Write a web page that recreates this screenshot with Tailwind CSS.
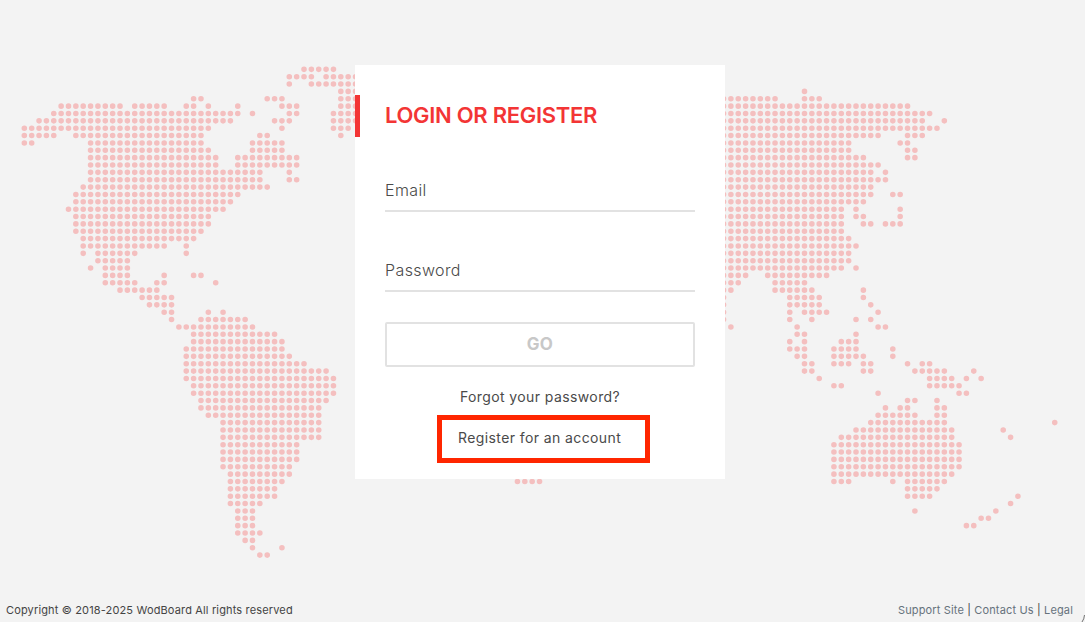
<!DOCTYPE html>
<html lang="en">
  <head>
    <meta charset="UTF-8" />
    <meta name="viewport" content="width=device-width, initial-scale=1.0" />
    <title>WodBoard - Login</title>
    <script src="https://cdn.jsdelivr.net/npm/@tailwindcss/browser@4"></script>
  </head>
  <body class="relative h-[622px] w-[1085px] overflow-hidden bg-[#f3f3f3] font-['Inter','Liberation_Sans',sans-serif] text-[#4a4a4a]">
    <!-- dotted world map: one unit = one grid step, each subpath is a run of dots -->
    <svg class="absolute inset-0" width="1085" height="622" viewBox="-3.306 -9.42 147.418 84.51" fill="none" stroke="#f4bfbf" stroke-width="0.76" stroke-linecap="round" stroke-dasharray="0 1" aria-hidden="true">
      <path d="M38 0h4.01 M36 1h3.01 M41 1h4.01 M36 2h.01 M39 2h6.01 M43 3h2.01 M23 4h1.01 M33 4h2.01 M43 4h2.01
        M5 5h8.01 M15 5h4.01 M22 5h1.01 M25 5h.01 M29 5h.01 M35 5h2.01 M43 5h2.01
        M4 6h25.01 M31 6h.01 M36 6h1.01 M42 6h3.01 M2 7h26.01 M34 7h2.01 M42 7h3.01
        M0 8h25.01 M35 8h.01 M42 8h2.01 M0 9h4.01 M7 9h17.01 M32 9h1.01 M43 9h.01
        M0 10h1.01 M9 10h15.01 M31 10h4.01 M9 11h16.01 M31 11h4.01
        M9 12h17.01 M29 12h8.01 M9 13h17.01 M29 13h8.01 M9 14h23.01 M36 14h.01 M9 15h23.01 M36 15h1.01
        M8 16h25.01 M7 17h22.01 M7 18h21.01 M6 19h21.01 M7 20h18.01 M7 21h18.01 M7 22h17.01 M8 23h15.01
        M8 24h11.01 M22 24h.01 M8 25h.01 M10 25h5.01 M22 25h.01 M10 26h4.01 M9 27h.01 M11 27h3.01
        M11 28h3.01 M19 28h.01 M23 28h1.01 M11 29h4.01 M18 29h1.01 M26 29h.01 M13 30h5.01 M16 31h4.01
        M17 32h3.01 M19 33h1.01 M25 33h.01 M27 33h.01 M20 34h.01 M24 34h6.01 M21 35h10.01
        M23 36h11.01 M23 37h12.01 M22 38h13.01 M22 39h14.01 M22 40h16.01 M22 41h19.01 M22 42h20.01
        M23 43h19.01 M23 44h19.01 M24 45h17.01 M24 46h16.01 M25 47h15.01 M27 48h13.01 M27 49h13.01 M27 50h13.01
        M27 51h10.01 M27 52h10.01 M27 53h10.01 M27 54h9.01 M28 55h8.01 M28 56h7.01 M28 57h6.01 M28 58h6.01 M28 59h4.01
        M29 60h2.01 M29 61h2.01 M29 62h2.01 M29 63h3.01 M30 64h1.01 M31 65h.01 M35 65h.01 M32 66h1.01
        M67 56h3.01" />
      <path d="M106 3h.01 M95 4h7.01 M106 4h2.01 M95 5h25.01 M95 6h28.01 M95 7h27.01 M125 7h.01 M95 8h29.01
        M95 9h21.01 M120 9h2.01 M95 10h17.01 M119 10h1.01 M95 11h17.01 M120 11h1.01 M95 12h19.01 M120 12h1.01
        M95 13h21.01 M95 14h20.01 M117 14h.01 M95 15h22.01 M95 16h20.01 M95 17h20.01 M118 17h1.01 M95 18h19.01
        M95 19h16.01 M113 19h.01 M119 19h.01 M95 20h16.01 M113 20h1.01 M119 20h.01 M95 21h16.01 M114 21h1.01 M117 21h2.01
        M95 22h16.01 M95 23h17.01 M95 24h18.01 M95 25h17.01 M95 26h17.01 M95 27h16.01 M113 27h.01
        M95 28h3.01 M101 28h8.01 M95 29h2.01 M102 29h4.01 M95 30h1.01 M102 30h5.01 M114 30h.01
        M95 31h.01 M104 31h4.01 M114 31h.01 M95 32h.01 M104 32h4.01 M115 32h.01 M95 33h.01 M104 33h.01 M106 33h3.01 M116 33h.01
        M95 34h.01 M104 34h.01 M107 34h.01 M113 34h.01 M115 34h.01 M96 35h.01 M105 35h.01 M116 35h1.01
        M105 36h1.01 M113 36h.01 M104 37h.01 M106 37h.01 M111 37h2.01 M104 38h2.01 M110 38h3.01 M118 38h.01
        M105 39h1.01 M110 39h4.01 M118 39h.01 M106 40h1.01 M110 40h2.01 M114 40h1.01 M120 40h.01 M122 40h1.01
        M106 41h1.01 M114 41h1.01 M121 41h4.01 M129 41h.01 M108 42h.01 M123 42h3.01 M128 42h.01 M130 42h.01
        M110 43h1.01 M123 43h4.01 M116 44h.01 M127 44h1.01 M120 45h1.01 M124 45h.01
        M117 46h.01 M119 46h1.01 M124 46h1.01 M116 47h5.01 M124 47h1.01 M115 48h10.01 M140 48h.01
        M113 49h13.01 M133 49h.01 M111 50h15.01 M134 50h.01 M110 51h17.01 M110 52h17.01 M110 53h17.01 M110 54h17.01
        M110 55h16.01 M110 56h2.01 M118 56h.01 M120 56h5.01 M120 57h4.01 M120 58h3.01 M135 58h.01 M134 59h.01
        M121 60h.01 M132 60h.01 M130 61h1.01 M128 62h1.01" />
    </svg>

    <main class="absolute left-[355px] top-[65px] flex h-[414px] w-[370px] flex-col bg-white px-[30px]">
      <span class="absolute left-0 top-[30px] h-[42px] w-[5px] bg-[#f33535]"></span>
      <h1 class="mt-[35px] text-[22px] leading-[30px] font-semibold tracking-[-0.3px] whitespace-nowrap text-[#f33535]">LOGIN OR REGISTER</h1>
      <label class="mt-[48px] block h-[34px] border-b-2 border-[#e2e2e2] text-base leading-[24px] font-light tracking-[0.4px]">Email</label>
      <label class="mt-[46px] block h-[34px] border-b-2 border-[#e2e2e2] text-base leading-[24px] font-light tracking-[0.4px]">Password</label>
      <button class="mt-[30px] h-[45px] rounded-[2px] border-2 border-[#e2e2e2] text-[17px] font-bold tracking-[0.3px] text-[#c8c8c8]">GO</button>
      <a class="mt-[20px] text-center text-sm leading-5 tracking-[0.4px]">Forgot your password?</a>
      <a class="mt-[8px] ml-[52px] flex h-[48px] w-[213px] items-center border-[5px] border-[#ff2600] pb-[2px] pl-4 text-sm tracking-[0.4px]">Register for an account</a>
    </main>

    <footer class="absolute inset-x-0 bottom-0 flex h-[24px] items-center justify-between pr-3 pl-1.5 text-[11px] tracking-[0.15px]">
      <span class="text-[#444444]">Copyright © 2018-2025 WodBoard All rights reserved</span>
      <span class="text-[#444444]"><a class="text-[#66727c]">Support Site</a> | <a class="text-[#66727c]">Contact Us</a> | <a class="text-[#66727c]">Legal</a></span>
    </footer>

    <!-- window corner caught in the capture -->
    <svg class="absolute right-0 bottom-0" width="4" height="7" viewBox="0 0 4 7" fill="none" aria-hidden="true">
      <path d="M3.5 0Q3.2 4 1 7" stroke="#3a3a3a" stroke-opacity="0.7" />
    </svg>
  </body>
</html>
